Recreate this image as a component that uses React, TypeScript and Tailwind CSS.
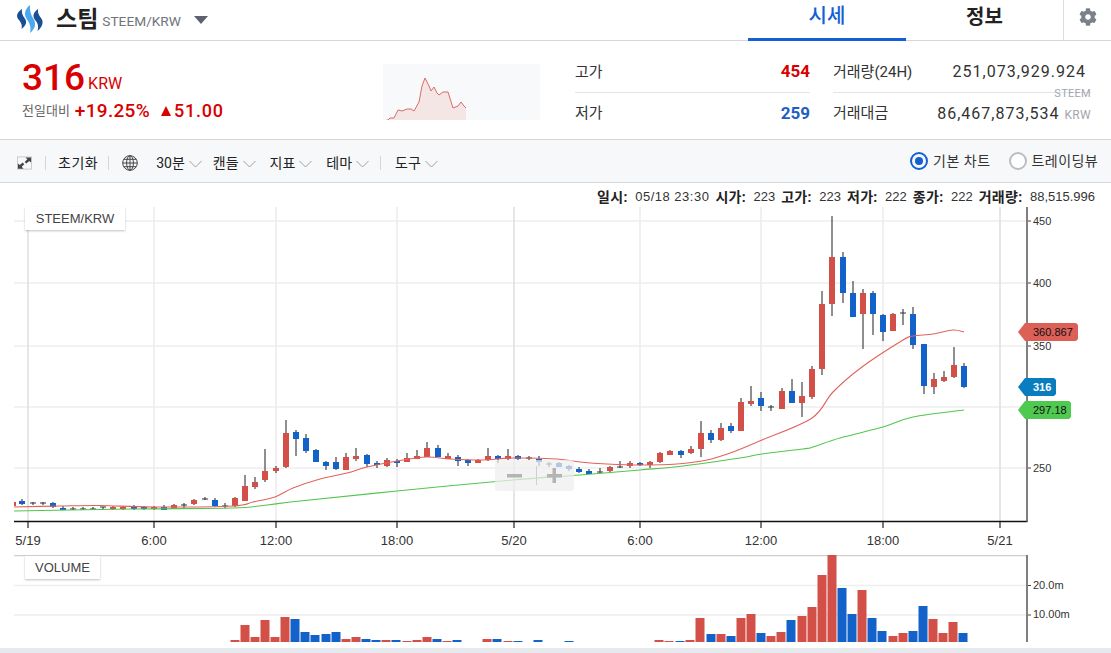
import React from 'react';
import { FaCog } from 'react-icons/fa';

type Candle = [number, number, number, number, number, 'r' | 'b' | 'd'];

const FONT = "font-['Roboto','Noto_Sans_CJK_KR',sans-serif]";
const AXIS_FONT = 'Liberation Sans';

// wickTop, wickBottom, bodyTop, bodyBottom are page y's; x is the candle's centre
const candles: Candle[] = [
  [22, 499, 505, 501, 504, 'b'], [33, 502, 505, 503, 504, 'd'], [43, 502, 505, 503, 504, 'd'],
  [53, 502, 508, 503, 507, 'b'], [63, 506, 510, 508, 510, 'b'], [73, 507, 510, 509, 510, 'd'], [83, 507, 510, 509, 510, 'd'],
  [93, 507, 510, 509, 510, 'd'], [103, 507, 510, 507, 508, 'd'], [113, 506, 510, 507, 509, 'r'], [123, 506, 510, 507, 509, 'r'],
  [134, 505, 510, 506, 509, 'b'], [144, 506, 510, 507, 509, 'b'], [154, 506, 510, 507, 509, 'r'], [164, 505, 510, 507, 510, 'b'],
  [174, 504, 509, 505, 509, 'r'], [184, 503, 509, 505, 506, 'd'], [194, 499, 505, 500, 504, 'r'], [205, 497, 500, 499, 500, 'd'],
  [215, 498, 507, 500, 506, 'b'], [225, 503, 508, 506, 507, 'd'], [235, 497, 507, 498, 506, 'r'], [245, 475, 501, 486, 501, 'r'],
  [255, 477, 489, 482, 487, 'r'], [265, 449, 482, 471, 480, 'r'], [276, 466, 473, 468, 471, 'r'], [286, 420, 468, 433, 467, 'r'],
  [296, 430, 456, 432, 439, 'b'], [306, 434, 453, 438, 451, 'b'], [316, 449, 462, 450, 462, 'b'], [326, 461, 470, 462, 466, 'b'],
  [336, 457, 470, 462, 469, 'b'], [346, 453, 470, 457, 470, 'r'], [356, 448, 461, 456, 459, 'r'], [367, 454, 467, 455, 464, 'b'],
  [377, 461, 468, 463, 465, 'b'], [387, 458, 467, 460, 466, 'r'], [397, 459, 467, 461, 463, 'b'], [407, 453, 462, 458, 462, 'r'],
  [417, 450, 459, 456, 459, 'r'], [427, 442, 457, 448, 457, 'r'], [438, 445, 457, 448, 457, 'b'], [448, 453, 459, 456, 459, 'r'],
  [458, 455, 466, 457, 461, 'b'], [468, 459, 466, 460, 463, 'b'], [478, 459, 463, 460, 463, 'r'], [488, 448, 461, 456, 460, 'r'],
  [498, 455, 463, 456, 459, 'b'], [508, 449, 460, 456, 459, 'r'], [518, 455, 460, 456, 459, 'b'], [529, 456, 460, 458, 459, 'd'],
  [539, 456, 466, 459, 462, 'b'], [549, 462, 467, 464, 465, 'd'], [559, 462, 467, 463, 467, 'b'], [569, 465, 471, 466, 469, 'b'],
  [579, 467, 473, 469, 472, 'b'], [589, 469, 474, 471, 474, 'b'], [600, 468, 473, 472, 473, 'd'], [610, 466, 472, 467, 471, 'r'],
  [620, 461, 468, 467, 468, 'd'], [630, 461, 468, 463, 466, 'r'], [640, 462, 466, 463, 465, 'b'], [650, 461, 468, 462, 465, 'r'],
  [660, 452, 463, 453, 462, 'r'], [670, 450, 455, 451, 455, 'r'], [681, 450, 458, 451, 455, 'b'], [691, 446, 454, 449, 453, 'r'],
  [701, 421, 457, 433, 449, 'r'], [711, 430, 443, 433, 440, 'b'], [721, 423, 441, 428, 440, 'r'], [731, 423, 433, 426, 431, 'b'],
  [741, 398, 431, 402, 431, 'r'], [751, 386, 406, 401, 404, 'r'], [761, 392, 411, 398, 406, 'b'], [771, 405, 411, 407, 408, 'd'],
  [782, 388, 409, 391, 409, 'r'], [792, 379, 403, 391, 403, 'b'], [802, 382, 417, 396, 403, 'r'], [812, 366, 399, 369, 397, 'r'],
  [822, 291, 375, 304, 369, 'r'], [832, 216, 316, 257, 304, 'r'], [843, 252, 303, 257, 293, 'b'], [853, 281, 317, 293, 317, 'b'],
  [863, 289, 349, 293, 314, 'r'], [873, 291, 335, 293, 314, 'b'], [883, 314, 341, 315, 332, 'b'], [893, 313, 331, 314, 331, 'r'],
  [903, 309, 325, 313, 314, 'd'], [913, 307, 349, 314, 345, 'b'], [924, 344, 394, 344, 386, 'b'], [934, 373, 394, 379, 387, 'r'],
  [944, 371, 382, 377, 381, 'r'], [954, 347, 378, 365, 377, 'r'], [964, 363, 388, 366, 387, 'b'],
];

const redMa: [number, number][] = [[14, 507], [60, 506], [100, 505.5], [153, 507], [233, 506], [253, 502], [275, 497], [293, 488], [320, 479], [347, 473], [367, 467], [397, 461], [427, 457], [450, 459], [483, 460], [513, 458], [557, 459], [580, 462], [607, 464], [640, 465], [677, 464], [707, 460], [733, 452], [762, 440], [812, 418], [833, 392], [862, 367], [903, 340], [913, 336], [933, 334], [953, 330], [964, 332]];
const greenMa: [number, number][] = [[14, 511], [133, 509], [233, 508], [267, 505], [300, 501], [397, 491], [513, 480], [580, 475], [640, 470], [683, 466], [740, 458], [762, 454], [803, 449], [813, 447], [840, 438], [883, 427], [913, 417], [964, 410]];

const volumes: [number, number, 'r' | 'b'][] = [
  [235, 640, 'r'], [245, 625, 'r'], [255, 637, 'r'], [265, 620, 'r'], [275, 637, 'r'], [285, 617, 'r'], [295, 619, 'b'], [305, 632, 'b'],
  [315, 635, 'b'], [326, 634, 'b'], [336, 632, 'b'], [346, 639, 'r'], [356, 637, 'r'], [366, 639, 'b'], [376, 640, 'b'], [386, 640, 'r'],
  [396, 640, 'b'], [407, 641, 'r'], [417, 640, 'r'], [427, 637, 'r'], [437, 639, 'b'], [447, 641, 'r'], [457, 640, 'b'], [487, 639, 'r'],
  [497, 639, 'b'], [508, 641, 'r'], [518, 641, 'b'], [538, 640, 'b'], [569, 641, 'b'], [659, 640, 'r'], [669, 641, 'r'], [680, 641, 'b'],
  [690, 640, 'r'], [700, 618, 'r'], [711, 634, 'b'], [721, 634, 'r'], [731, 636, 'b'], [741, 618, 'r'], [751, 614, 'r'], [761, 633, 'b'],
  [771, 636, 'r'], [781, 632, 'r'], [791, 620, 'b'], [802, 616, 'r'], [812, 607, 'r'], [822, 575, 'r'], [832, 555, 'r'], [842, 588, 'b'],
  [852, 614, 'b'], [862, 590, 'r'], [872, 618, 'b'], [882, 631, 'b'], [893, 636, 'r'], [903, 633, 'r'], [913, 631, 'b'], [923, 606, 'b'],
  [933, 619, 'r'], [943, 633, 'r'], [953, 622, 'r'], [963, 633, 'b'],
];

const gridX = [28, 154, 276, 397, 514, 640, 761, 883, 1000];
const dayX = [28, 514, 1000];
const timeLabels: [number, string][] = [[28, '5/19'], [154, '6:00'], [276, '12:00'], [397, '18:00'], [514, '5/20'], [640, '6:00'], [761, '12:00'], [883, '18:00'], [1000, '5/21']];
const priceLabels: [number, string][] = [[221, '450'], [283, '400'], [346, '350'], [468, '250']];

const RED = '#d25047';
const BLUE = '#1262c9';

// catmull-rom through the sampled points, the MA lines are curves in the picture
function smooth(pts: [number, number][]) {
  let d = `M${pts[0][0]} ${pts[0][1]}`;
  for (let i = 0; i < pts.length - 1; i++) {
    const p0 = pts[Math.max(i - 1, 0)];
    const p1 = pts[i];
    const p2 = pts[i + 1];
    const p3 = pts[Math.min(i + 2, pts.length - 1)];
    const c1x = p1[0] + (p2[0] - p0[0]) / 6;
    const c1y = p1[1] + (p2[1] - p0[1]) / 6;
    const c2x = p2[0] - (p3[0] - p1[0]) / 6;
    const c2y = p2[1] - (p3[1] - p1[1]) / 6;
    d += ` C${c1x} ${c1y} ${c2x} ${c2y} ${p2[0]} ${p2[1]}`;
  }
  return d;
}

function SteemLogo() {
  return (
    <svg width="28" height="29" viewBox="0 0 28 29" className="shrink-0">
      <path d="M6 4 C0 8 0 12 3 15 C5 17.5 6.5 20 5.5 24 C11 20 11 16 8.5 13 C6.5 10.5 5.5 8 6 4Z" fill="#1a4f96" />
      <path d="M22 4 C16.5 8 16.5 12 19.5 15.5 C21.5 18 23 21 21.5 26 C27.5 21 27.5 16 25 13 C23 10.5 21.5 8 22 4Z" fill="#1a4f96" />
      <path d="M14 0 C8 5 8 10 11 14.5 C13.5 18 15.5 22 14 28 C20 23 20 18 17.5 14 C15 10 13.5 6 14 0Z" fill="#4aa8f0" />
    </svg>
  );
}

function Chevron() {
  return (
    <svg width="13" height="8" viewBox="0 0 13 8" className="ml-1 mt-0.5">
      <path d="M0.5 1 L6.5 7 L12.5 1" fill="none" stroke="#9aa0a6" strokeWidth="1" />
    </svg>
  );
}

function Divider({ className }: { className: string }) {
  return <span className={`w-px h-3.5 bg-[#d4d6da] ${className}`} />;
}

function ExpandIcon() {
  return (
    <svg width="15" height="14" viewBox="0 0 16 14">
      <rect x="0.5" y="0.5" width="15" height="13" fill="none" stroke="#c9c9c9" />
      <path d="M9 1 H15 V6.5 L13 4.8 L10 7.5 L8.2 5.8 L11 3Z" fill="#444" />
      <path d="M7 13 H1 V7.5 L3 9.2 L6 6.5 L7.8 8.2 L5 11Z" fill="#444" />
    </svg>
  );
}

function GlobeIcon() {
  return (
    <svg width="16" height="16" viewBox="0 0 16 16" fill="none" stroke="#444" strokeWidth="1" className="block">
      <circle cx="8" cy="8" r="7.3" />
      <ellipse cx="8" cy="8" rx="3.4" ry="7.3" />
      <path d="M8 0.7 V15.3 M0.7 8 H15.3 M1.8 4.3 H14.2 M1.8 11.7 H14.2" />
    </svg>
  );
}

function ToolMenu({ label, className }: { label: string; className: string }) {
  return (
    <span className={`flex items-center text-sm text-[#222] ${className}`}>
      {label}
      <Chevron />
    </span>
  );
}

function StatRow({ label, children, border }: { label: string; children: React.ReactNode; border?: boolean }) {
  return (
    <div className={`flex items-center justify-between h-[41px] ${border ? 'border-b border-[#e2e4e8]' : ''}`}>
      <span className="text-[15px] text-[#333]">{label}</span>
      {children}
    </div>
  );
}

function Sparkline() {
  const pts = '0,57 5,56 7,54 11,54 15,46 19,47 24,45 28,45 31,47 36,38 39,22 42,14 46,22 48,27 51,23 54,29 56,31 60,28 65,28 70,44 75,42 78,38 81,42 83,44';
  return (
    <div className="w-[157px] h-14 bg-[#f8f9fb] ml-[106px] mt-[23px] shrink-0">
      <svg width="157" height="56" viewBox="0 0 157 56" className="block">
        <polygon points={`${pts} 83,56 0,56`} fill="#f5e6e6" />
        <polyline points={pts} fill="none" stroke="#dd6a66" strokeWidth="1" />
      </svg>
    </div>
  );
}

function MainChart() {
  return (
    <svg width="1111" height="348" viewBox="0 207 1111 348" className="block">
      {priceLabels.concat([[407, '']]).map(([y]) => (
        <line key={y} x1="14" x2="1027" y1={y} y2={y} stroke="#eeeeee" strokeWidth="1.5" />
      ))}
      {gridX.map(x => (
        <line key={x} x1={x} x2={x} y1="207" y2="521" stroke={dayX.includes(x) ? '#dedede' : '#ebebeb'} strokeWidth="1.5" />
      ))}
      <rect x="14" y="502" width="2" height="4" fill={RED} />
      {candles.map(([x, wt, wb, bt, bb, c]) => (
        <g key={x}>
          <line x1={x} x2={x} y1={wt} y2={wb} stroke="#333" strokeWidth="1.1" />
          {c === 'd' ? (
            <line x1={x - 3} x2={x + 3} y1={bt} y2={bt} stroke="#333" strokeWidth="1" />
          ) : (
            <rect x={x - 3} y={bt} width="6" height={bb - bt} fill={c === 'r' ? RED : BLUE} />
          )}
        </g>
      ))}
      <path d={smooth(redMa)} fill="none" stroke="#e2635c" strokeWidth="1.1" />
      <path d={smooth(greenMa)} fill="none" stroke="#52c64f" strokeWidth="1.1" />
      {/* zoom control floats over the candles */}
      <rect x="495" y="460" width="79" height="31" rx="3" fill="#eeeeee" fillOpacity="0.72" />
      <rect x="507" y="474" width="15" height="3.5" fill="#b4b4b4" />
      <line x1="536.5" x2="536.5" y1="466" y2="485" stroke="#cfcfcf" />
      <rect x="547" y="474" width="15" height="3.5" fill="#b4b4b4" />
      <rect x="552.5" y="468" width="3.5" height="15" fill="#b4b4b4" />
      <line x1="14" x2="1027.5" y1="521.5" y2="521.5" stroke="#111" strokeWidth="1.3" />
      <line x1="1027" x2="1027" y1="207" y2="522" stroke="#555" strokeWidth="1.5" />
      {gridX.map(x => (
        <line key={x} x1={x} x2={x} y1="522" y2="528" stroke="#222" strokeWidth="1.2" />
      ))}
      {priceLabels.map(([y, t]) => (
        <g key={y}>
          <line x1="1028" x2="1031" y1={y} y2={y} stroke="#444" />
          <text x="1033" y={y + 4} fontSize="11" fontFamily={AXIS_FONT} fill="#333">{t}</text>
        </g>
      ))}
      {timeLabels.map(([x, t]) => (
        <text key={x} x={x} y="545" fontSize="13" textAnchor="middle" fontFamily={AXIS_FONT} fill="#333">{t}</text>
      ))}
      <polygon points="1018,332 1025,323 1076,323 1078,325 1078,339 1076,341 1025,341" fill="#dc5f58" />
      <text x="1033" y="336" fontSize="11" fontFamily={AXIS_FONT} fill="#111">360.867</text>
      <polygon points="1018,387 1025,378 1054,378 1056,380 1056,394 1054,396 1025,396" fill="#0a7dbf" />
      <text x="1033" y="391" fontSize="11" fontWeight="700" fontFamily={AXIS_FONT} fill="#fff">316</text>
      <polygon points="1018,410 1025,401 1069,401 1071,403 1071,417 1069,419 1025,419" fill="#4fc94f" />
      <text x="1033" y="414" fontSize="11" fontFamily={AXIS_FONT} fill="#111">297.18</text>
    </svg>
  );
}

function VolumeChart() {
  return (
    <svg width="1111" height="93" viewBox="0 555 1111 93" className="block">
      <line x1="14" x2="1027" y1="555.5" y2="555.5" stroke="#cfcfcf" strokeWidth="1.3" />
      <line x1="14" x2="1027" y1="585.5" y2="585.5" stroke="#eeeeee" strokeWidth="1.5" />
      <line x1="14" x2="1027" y1="615" y2="615" stroke="#eeeeee" strokeWidth="1.5" />
      {volumes.map(([x, top, c]) => (
        <rect key={x} x={x - 4.5} y={top} width="9" height={642 - top} fill={c === 'r' ? RED : BLUE} />
      ))}
      <line x1="1027" x2="1027" y1="555" y2="642" stroke="#555" strokeWidth="1.5" />
      <line x1="1028" x2="1031" y1="585.5" y2="585.5" stroke="#444" />
      <line x1="1028" x2="1031" y1="615" y2="615" stroke="#444" />
      <text x="1033" y="589" fontSize="11" fontFamily={AXIS_FONT} fill="#333">20.0m</text>
      <text x="1033" y="618" fontSize="11" fontFamily={AXIS_FONT} fill="#333">10.00m</text>
    </svg>
  );
}

function LegendTag({ label, className }: { label: string; className: string }) {
  return (
    <div className={`absolute left-[25px] flex items-center justify-center h-[23px] bg-white font-['Liberation_Sans',sans-serif] text-[13px] text-[#444] shadow-[0_1px_2px_rgba(0,0,0,0.25)] ${className}`}>
      {label}
    </div>
  );
}

function InfoItem({ label, value, first, wide }: { label: string; value: string; first?: boolean; wide?: boolean }) {
  return (
    <>
      <b className={`text-sm font-bold tracking-[0.3px] text-[#222] ${first ? '' : 'ml-1.5'}`}>{label}</b>
      <span className={`ml-[7.5px] font-['Liberation_Sans',sans-serif] text-[13px] text-[#333] ${wide ? 'tracking-[0.5px]' : ''}`}>{value}</span>
    </>
  );
}

export default function App() {
  return (
    <div className={`w-[1111px] h-[653px] overflow-hidden bg-white ${FONT}`}>
      <header className="flex h-[41px] border-b border-[#d5d7da]">
        <div className="flex items-center pl-[16px] pb-0.5">
          <SteemLogo />
          <span className="ml-[12px] text-[23px] leading-none font-bold text-[#222]">스팀</span>
          <span className="ml-1 mt-1 text-[13.7px] text-[#70757c]">STEEM/KRW</span>
          <span className="ml-[13px] mt-0.5 w-0 h-0 border-x-[7px] border-x-transparent border-t-[8px] border-t-[#5c6270]" />
        </div>
        <nav className="ml-auto flex h-full">
          <div className="w-[158px] flex justify-center items-center pb-1.5 h-[41px] border-b-[3px] border-[#1260d4] text-[#1260d4] text-xl font-medium">시세</div>
          <div className="w-[157px] flex justify-center items-center pb-1.5 text-[#222] text-xl font-bold">정보</div>
          <div className="w-[48px] flex justify-center items-center pb-1.5 border-l border-[#dddddd]">
            <FaCog size={18} color="#7c8087" />
          </div>
        </nav>
      </header>

      <section className="flex h-[99px] border-b border-[#d5d7da]">
        <div className="w-[277px] pl-[22px] pt-[14px] shrink-0">
          <div className="flex items-end h-[46px]">
            <span className="text-[37px] leading-[46px] font-medium text-[#d80000]">316</span>
            <span className="ml-[3px] mb-[7px] text-base leading-5 text-[#d80000]">KRW</span>
          </div>
          <div className="flex items-center h-[26px] -mt-[3px]">
            <span className="text-[13px] text-[#666]">전일대비</span>
            <span className="ml-[5px] text-[19px] font-medium tracking-[0.3px] text-[#d80000]">+19.25%</span>
            <span className="ml-[11px] w-0 h-0 border-x-[5.5px] border-x-transparent border-b-[10px] border-b-[#d80000]" />
            <span className="ml-[3px] text-lg font-medium tracking-[0.8px] text-[#d80000]">51.00</span>
          </div>
        </div>
        <Sparkline />
        <div className="ml-[35px] w-[235px] pt-[11px] shrink-0">
          <StatRow label="고가" border><span className="text-[17px] font-bold text-[#d80000]">454</span></StatRow>
          <StatRow label="저가"><span className="text-[17px] font-bold text-[#1e5fc4]">259</span></StatRow>
        </div>
        <div className="relative ml-[23px] w-[258px] pt-[11px] shrink-0">
          <StatRow label="거래량(24H)" border>
            <span className="mr-[5px] text-base tracking-[1px] text-[#333]">251,073,929.924</span>
          </StatRow>
          <StatRow label="거래대금">
            <span className="flex items-baseline">
              <span className="text-base tracking-[1px] text-[#333]">86,467,873,534</span>
              <span className="ml-[5px] text-xs tracking-[0.3px] text-[#a2a6ad]">KRW</span>
            </span>
          </StatRow>
          <span className="absolute right-0 top-[46px] text-[11px] leading-[14px] tracking-[0.3px] text-[#a2a6ad]">STEEM</span>
        </div>
      </section>

      <section className="flex items-center h-[43px] pl-[17px] bg-[#f7f8fa] border-b border-[#d5d7da]">
        <div className="flex items-center pt-1">
          <ExpandIcon />
          <Divider className="ml-[13px]" />
          <span className="ml-3 text-sm tracking-[0.5px] text-[#222]">초기화</span>
          <Divider className="ml-[10px]" />
          <span className="ml-[13px]"><GlobeIcon /></span>
          <ToolMenu label="30분" className="ml-[18px]" />
          <ToolMenu label="캔들" className="ml-[11px]" />
          <ToolMenu label="지표" className="ml-[14px]" />
          <ToolMenu label="테마" className="ml-[14px]" />
          <Divider className="ml-[11px]" />
          <ToolMenu label="도구" className="ml-[14px]" />
        </div>
        <div className="ml-auto flex items-center pr-[13px]">
          <span className="flex items-center justify-center w-[18px] h-[18px] rounded-full border-2 border-[#1260d4]">
            <span className="w-2 h-2 rounded-full bg-[#1260d4]" />
          </span>
          <span className="ml-[5px] text-sm tracking-[0.5px] text-[#333]">기본 차트</span>
          <span className="ml-[18px] w-[18px] h-[18px] rounded-full border-2 border-[#bdbdbd] bg-white" />
          <span className="ml-[5px] text-sm tracking-[0.4px] text-[#333]">트레이딩뷰</span>
        </div>
      </section>

      <section className="relative">
        <div className="flex justify-end items-center h-6 pr-[16px] pt-1">
          <InfoItem label="일시:" value="05/18 23:30" first wide />
          <InfoItem label="시가:" value="223" />
          <InfoItem label="고가:" value="223" />
          <InfoItem label="저가:" value="222" />
          <InfoItem label="종가:" value="222" />
          <InfoItem label="거래량:" value="88,515.996" />
        </div>
        <MainChart />
        <VolumeChart />
        <div className="h-[5px] bg-[#e6eaef]" />
        <LegendTag label="STEEM/KRW" className="top-[24px] w-[100px]" />
        <LegendTag label="VOLUME" className="top-[373px] w-[75px]" />
      </section>
    </div>
  );
}
